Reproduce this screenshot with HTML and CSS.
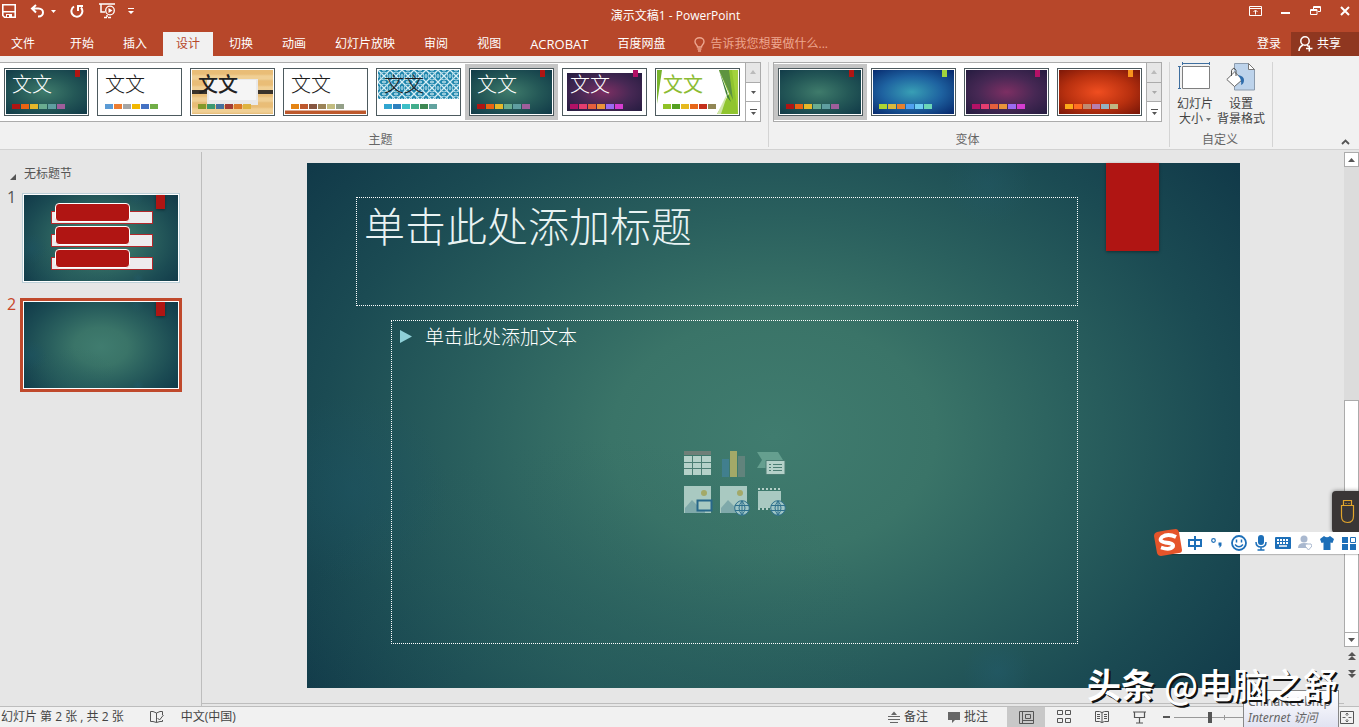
FILE: index.html
```html
<!DOCTYPE html>
<html lang="zh-CN">
<head>
<meta charset="utf-8">
<title>演示文稿1 - PowerPoint</title>
<link rel="stylesheet" href="styles.css">
</head>
<body>
<header class="titlebar">
  <div class="quick">
    <button class="ic save" aria-label="保存"><svg width="14" height="14" viewBox="0 0 14 14"><path d="M.8.8h12.400v12.400H2.500L.8 11.500z" fill="none" stroke="#fff" stroke-width="1.600"/><path d="M1 7h12v1.500H1zM4 10h6v3.500H4z" fill="#fff"/><path d="M5 11h2v2H5z" fill="#b7472a"/></svg></button>
    <button class="ic undo" aria-label="撤消"><svg width="15" height="14" viewBox="0 0 15 14"><path d="M6 1 2 4.500l4 4M2.500 4.500h6c6 0 6 8 0 8H8" fill="none" stroke="#fff" stroke-width="2"/></svg></button>
    <button class="ic more" aria-label="撤消选项"><svg width="5" height="3"><path d="M0 0h5L2.500 3z" fill="#fff"/></svg></button>
    <button class="ic redo" aria-label="重复"><svg width="14" height="14" viewBox="0 0 14 14"><path d="M4 2.500a5.500 5.500 0 1 0 7 1M8 7V2h5" fill="none" stroke="#fff" stroke-width="2"/></svg></button>
    <button class="ic show" aria-label="从头开始"><svg width="17" height="16" viewBox="0 0 17 16"><path d="M0 1h16M2 1v8h4M5 14.500h3M9 14.500h3M8 12v2" fill="none" stroke="#fff" stroke-width="1.500"/><circle cx="11" cy="7.500" r="4.300" fill="none" stroke="#fff" stroke-width="1.300"/><path d="m9.500 5 4 2.500-4 2.500z" fill="#fff"/></svg></button>
    <button class="ic custom" aria-label="自定义快速访问工具栏"><svg width="6" height="6"><path d="M0 0h6v1H0zM0 3h6L3 6z" fill="#fff"/></svg></button>
  </div>
  <div class="doc">演示文稿1 - PowerPoint</div>
  <div class="winctl">
    <button class="ic" aria-label="功能区显示选项"><svg width="13" height="10"><path d="M.5.5h12v9H.5zM.5 2.500h12M6.500 8.500v-4M4.500 6l2-2 2 2" fill="none" stroke="#fff"/></svg></button>
    <button class="ic" aria-label="最小化"><svg width="10" height="10"><path d="M0 6h9v2H0z" fill="#fff"/></svg></button>
    <button class="ic" aria-label="还原"><svg width="11" height="10"><path d="M3.500 3V.5h7v5H8M.5 3.500H7v5H.5zM.5 4.500H7M3.500 1.500h7" fill="none" stroke="#fff"/></svg></button>
    <button class="ic" aria-label="关闭"><svg width="10" height="10"><path d="m1 1 8 8M9 1 1 9" stroke="#fff" stroke-width="2"/></svg></button>
  </div>
</header>
<nav class="tabs">
  <button class="tab file">文件</button><button class="tab">开始</button><button class="tab">插入</button><button class="tab on">设计</button><button class="tab">切换</button><button class="tab">动画</button><button class="tab">幻灯片放映</button><button class="tab">审阅</button><button class="tab">视图</button><button class="tab latin">ACROBAT</button><button class="tab">百度网盘</button>
  <label class="tell"><svg width="11" height="15" viewBox="0 0 11 15"><path d="M3.500 10C3.500 8 1 7.500 1 4.700a4.500 4 0 0 1 9 0C10 7.500 7.500 8 7.500 10zM3.500 12h4M4 14h3" fill="none" stroke="#eda68f" stroke-width="1.400"/></svg><input type="text" placeholder="告诉我您想要做什么..." aria-label="告诉我您想要做什么"></label>
  <button class="login">登录</button>
  <button class="share"><svg width="15" height="16" viewBox="0 0 15 16"><circle cx="7" cy="5" r="4.200" fill="none" stroke="#fff" stroke-width="1.500"/><path d="M1 15c0-3 2-5 4-6M9 9l1.500 1.500M8 12.500h6.500M11.300 9.500v6" fill="none" stroke="#fff" stroke-width="1.500"/></svg>共享</button>
</nav>
<section class="ribbon">
  <div class="group">
    <div class="gallery first">
      <button class="item"><span class="thumb teal"><span class="aa">文文</span><span class="chips"><i></i><i></i><i></i><i></i><i></i><i></i></span></span></button>
      <button class="item"><span class="thumb office"><span class="aa">文文</span><span class="chips"><i></i><i></i><i></i><i></i><i></i><i></i></span></span></button>
      <button class="item"><span class="thumb wood"><svg class="art" viewBox="0 0 81 44"><path d="M0 20h81v4H0z" fill="#3a332b"/><path d="M15 9h51v26H15z" fill="#e9e9ea"/><path d="M17 10h47v20H17z" fill="#f5f5f5"/></svg><span class="aa heavy">文文</span><span class="chips"><i></i><i></i><i></i><i></i><i></i><i></i></span></span></button>
      <button class="item"><span class="thumb retro"><span class="aa">文文</span><span class="chips"><i></i><i></i><i></i><i></i><i></i><i></i></span></span></button>
      <button class="item"><span class="thumb lattice"><svg class="art" viewBox="0 0 81 44"><defs><pattern id="lat" width="12" height="12" patternUnits="userSpaceOnUse"><rect width="12" height="12" fill="#2187ad"/><path d="M0 0l12 12M12 0L0 12" stroke="#d6eef5" stroke-width="1.300"/><circle cx="6" cy="6" r="4" fill="none" stroke="#a9d6e5"/><path d="M0 4v4M12 4v4M4 0h4M4 12h4" stroke="#bfe2ec" stroke-width="1.300"/></pattern></defs><rect width="81" height="29" fill="url(#lat)"/></svg><span class="aa">文文</span><span class="chips"><i></i><i></i><i></i><i></i><i></i><i></i></span></span></button>
      <button class="item sel"><span class="thumb teal"><span class="aa">文文</span><span class="chips"><i></i><i></i><i></i><i></i><i></i><i></i></span></span></button>
      <button class="item"><span class="thumb plum inset"><span class="aa">文文</span><span class="chips"><i></i><i></i><i></i><i></i><i></i><i></i></span></span></button>
      <button class="item"><span class="thumb facet"><svg class="art" viewBox="0 0 81 44"><path d="M0 0h5L0 34z" fill="#77b32b"/><path d="M62 0h19v44H60l12-20z" fill="#90c52f"/><path d="M62 0h10l4 30z" fill="#5e9440"/><path d="M62 0l12 32-4-5z" fill="#3e7f38"/><path d="M72 20l-8 24h-4z" fill="#cfe6a5"/><path d="M75 0h6v44z" fill="#a3d23c"/></svg><span class="aa green">文文</span><span class="chips"><i></i><i></i><i></i><i></i><i></i><i></i></span></span></button>
      <div class="spin"><button disabled aria-label="上一行"><svg width="6" height="4"><path d="M0 4h6L3 0z" fill="#bbb"/></svg></button><button aria-label="下一行"><svg width="5" height="3"><path d="M0 0h5L2.500 3z" fill="#555"/></svg></button><button aria-label="其他主题"><svg width="7" height="6"><path d="M0 0h7v1H0zM1 3h5L3.500 6z" fill="#555"/></svg></button></div>
    </div>
    <div class="gname">主题</div>
  </div>
  <div class="group variants">
    <div class="gallery">
      <button class="item sel"><span class="thumb teal"><span class="chips"><i></i><i></i><i></i><i></i><i></i><i></i></span></span></button>
      <button class="item"><span class="thumb blue"><span class="chips"><i></i><i></i><i></i><i></i><i></i><i></i></span></span></button>
      <button class="item"><span class="thumb plum"><span class="chips"><i></i><i></i><i></i><i></i><i></i><i></i></span></span></button>
      <button class="item"><span class="thumb fire"><span class="chips"><i></i><i></i><i></i><i></i><i></i><i></i></span></span></button>
      <div class="spin"><button disabled aria-label="上一行"><svg width="6" height="4"><path d="M0 4h6L3 0z" fill="#bbb"/></svg></button><button disabled aria-label="下一行"><svg width="5" height="3"><path d="M0 0h5L2.500 3z" fill="#aaa"/></svg></button><button aria-label="其他变体"><svg width="7" height="6"><path d="M0 0h7v1H0zM1 3h5L3.500 6z" fill="#555"/></svg></button></div>
    </div>
    <div class="gname">变体</div>
  </div>
  <div class="group customise">
    <div class="bigs">
      <button class="big"><svg width="34" height="30" viewBox="0 0 34 30"><path d="M4.500 4.500h27v22h-27z" fill="#fff" stroke="#7f7f7f"/><path d="M4 1.500h28M4.500 0v3M31.500 0v3M1.500 4v23M0 4.500h3M0 26.500h3" stroke="#3f6f9f" fill="none"/></svg><span>幻灯片<br>大小 <svg width="5" height="3"><path d="M0 0h5L2.500 3z" fill="#777"/></svg></span></button>
      <button class="big"><svg width="30" height="30" viewBox="0 0 30 30"><path d="M8 2h15l6 6v20H8z" fill="#bdd3eb"/><path d="M8.500 8V1.500h14l6 6v20.500h-20V23" fill="none" stroke="#8b9bad"/><path d="M22.500 1.500v6h6z" fill="#fff" stroke="#777"/><path d="M.8 17.500 8.500 10l8 7.500-8 7z" fill="#fff" stroke="#666"/><path d="M5.500 14V8.500q2.500-4.500 4.500 0V14" fill="none" stroke="#555"/><path d="M12 13q6 1 6 5 0 4-3 5 1-5-3-10z" fill="#2e6cab"/></svg><span>设置<br>背景格式</span></button>
    </div>
    <div class="gname">自定义</div>
  </div>
  <button class="collapse" aria-label="折叠功能区"><svg width="9" height="6"><path d="M1 5l3.500-3.500L8 5" fill="none" stroke="#555" stroke-width="1.800"/></svg></button>
</section>
<main class="work">
  <aside class="pane">
    <div class="section"><svg width="6" height="6"><path d="M6 0v6H0z" fill="#555"/></svg>无标题节</div>
    <div class="row"><span class="num">1</span><button class="mini" aria-label="幻灯片 1"><span class="pic slidebg"><span class="bars"><i></i><i></i><i></i></span></span></button></div>
    <div class="row cur"><span class="num">2</span><button class="mini" aria-label="幻灯片 2"><span class="pic slidebg"></span></button></div>
  </aside>
  <div class="stage">
    <article class="slide slidebg">
      <h1 class="ph title">单击此处添加标题</h1>
      <div class="ph body">
        <p class="bullet"><svg width="12" height="13"><path d="M0 0v13l12-6.500z" fill="#8fd0d8"/></svg>单击此处添加文本</p>
        <div class="inserts">
          <button aria-label="插入表格"><svg width="30" height="28" viewBox="0 0 30 28"><path d="M1 1h27v4H1z" fill="#6f7f78"/><path d="M1 6h27v19H1z" fill="#b5d1c9"/><path d="M1 12.500h27M1 18.500h27M9.500 6v19M18.500 6v19" stroke="#4b7d73"/></svg></button>
          <button aria-label="插入图表"><svg width="30" height="28" viewBox="0 0 30 28"><path d="M2 9h7v18H2z" fill="#417f8e"/><path d="M10 1h7v26h-7z" fill="#a3a968"/><path d="M18 6h7v21h-7z" fill="#61837c"/></svg></button>
          <button aria-label="插入 SmartArt 图形"><svg width="30" height="28" viewBox="0 0 30 28"><path d="M0 2h21l5 8-5 8H0l5-8z" fill="#659f8f"/><path d="M9 10.500h19v14H9z" fill="#b5d1c9" stroke="#4b7d73"/><path d="M12 14.500h2M16 14.500h9M12 17.500h2M16 17.500h9M12 20.500h2M16 20.500h9" stroke="#4b7d73"/></svg></button>
          <button aria-label="图片"><svg width="30" height="28" viewBox="0 0 30 28"><path d="M1 0h27v27H1z" fill="#a9c9c1"/><path d="M2 27V22l7-8 6 6 3-3 4 4v6z" fill="#7fa9aa"/><circle cx="21" cy="7" r="3" fill="#a3a968"/><path d="M14.500 14.500h14v10h-14z" fill="#a9c9c1" stroke="#28688a" stroke-width="2"/></svg></button>
          <button aria-label="联机图片"><svg width="30" height="28" viewBox="0 0 30 28"><path d="M0 0h27v27H0z" fill="#a9c9c1"/><path d="M1 27V22l7-8 6 6 3-3 4 4v6z" fill="#7fa9aa"/><circle cx="20" cy="7" r="3" fill="#a3a968"/><g fill="#9fc5c5" stroke="#2f708c"><circle cx="22" cy="22" r="7.300"/><path d="M15 19.500h14M15 24.500h14M22 15v14M22 15q-6 7 0 14q6-7 0-14" fill="none"/></g></svg></button>
          <button aria-label="插入视频文件"><svg width="30" height="28" viewBox="0 0 30 28"><path d="M1 5h23v17H1z" fill="#a9c9c1"/><path d="M1 3h23M1 23h23" stroke="#b5d1c9" stroke-width="2" stroke-dasharray="2 2"/><g fill="#9fc5c5" stroke="#2f708c"><circle cx="21" cy="22" r="7.300"/><path d="M14 19.500h14M14 24.500h14M21 15v14M21 15q-6 7 0 14q6-7 0-14" fill="none"/></g></svg></button>
        </div>
      </div>
    </article>
  </div>
  <div class="scroll">
    <button class="box" aria-label="向上滚动"><svg width="7" height="4"><path d="M0 4h7L3.500 0z" fill="#555"/></svg></button>
    <div class="track"><div class="knob"></div></div>
    <button class="box" aria-label="向下滚动"><svg width="7" height="4"><path d="M0 0h7L3.500 4z" fill="#555"/></svg></button>
    <button class="jump" aria-label="上一张幻灯片"><svg width="8" height="9"><path d="M4 0l4 4H0zM4 4l4 4H0z" fill="#555"/></svg></button>
    <button class="jump" aria-label="下一张幻灯片"><svg width="8" height="9"><path d="M0 0h8L4 4zM0 4h8L4 8z" fill="#555"/></svg></button>
  </div>
</main>
<footer class="status">
  <span>幻灯片 第 2 张 , 共 2 张</span>
  <button class="ic spell" aria-label="拼写检查"><svg width="15" height="13"><path d="M7.500 2v9.500L4 10.500H1.500v-10H4zM7.500 2 11 .5h2.500V4M13.500 9v1.500H11l-3.500 1M8.500 7l2 2 4-5" fill="none" stroke="#555"/></svg></button>
  <button class="txt">中文(中国)</button>
  <div class="right">
    <button class="txt notes"><svg width="12" height="12"><path d="M0 5.500h12M0 8.500h12M2 11.500h8" stroke="#666"/><path d="M3 4l3-3.500L9 4z" fill="#666"/></svg>备注</button>
    <button class="txt comments"><svg width="12" height="12"><path d="M0 1h12v8H7l-3 3V9H0z" fill="#666"/></svg>批注</button>
    <button class="view on" aria-label="普通视图"><svg width="15" height="13"><path d="M.5.5h14v12H.5zM3.500.5v12M6.500 3.500h5v4h-5zM3.500 9.500h11" fill="none" stroke="#555"/></svg></button>
    <button class="view" aria-label="幻灯片浏览"><svg width="15" height="14"><path d="M.5.5h5v4h-5zM8.500.5h5v4h-5zM.5 8.500h5v4h-5zM8.500 8.500h5v4h-5z" fill="none" stroke="#555"/></svg></button>
    <button class="view" aria-label="阅读视图"><svg width="14" height="14"><path d="M.5 1.500h4l2.500 1 2.500-1h4v10h-4l-2.500 1-2.500-1h-4zM7 2v11M2 4.500h3M2 6.500h3M2 8.500h3M9 4.500h3M9 6.500h3M9 8.500h3" fill="none" stroke="#555"/></svg></button>
    <button class="view" aria-label="幻灯片放映"><svg width="14" height="13"><path d="M0 1h13M1.500 1v5.500h10V1M6.500 6.500v5M3 12h7" fill="none" stroke="#555" stroke-width="1.200"/></svg></button>
    <button class="ic minus" aria-label="缩小"><svg width="7" height="4"><path d="M0 1h7v2H0z" fill="#555"/></svg></button>
    <input class="zoom" type="range" min="0" max="100" value="35" aria-label="缩放">
    <button class="ic fit" aria-label="使幻灯片适应当前窗口"><svg width="14" height="13"><path d="M.5.5h13v12H.5z" fill="none" stroke="#555"/><path d="M7 2v3M7 8v3M2.500 6.500h3M8.500 6.500h3M5.500 3.500 7 2l1.500 1.500M5.500 9.500 7 11l1.500-1.500" fill="none" stroke="#666"/></svg></button>
  </div>
</footer>
<div class="nettip"><span>ChinaNet-bhtp</span><em>Internet 访问</em></div>
<div class="usb"><svg width="15" height="24"><path d="M3.500.5h8v5h-8zM1.500 5.500h12V16q0 6.500-6 6.500t-6-6.500zM5.500 3.500h1M8.500 3.500h1" fill="none" stroke="#e2a52c" stroke-width="1.200"/></svg></div>
<div class="ime">
  <svg class="logo" width="28" height="28" viewBox="0 0 28 28"><path d="M3 3Q12 1 22 0q2 0 3 3l3 18q0 3-3 3L7 27q-3 0-4-3L0 7q0-3 3-4z" fill="#e5542a"/><path d="M22 8Q14 4 8 8q-4 4 3 5.500 9 .5 8 4-3 4-12 1" fill="none" stroke="#fff" stroke-width="3.800"/></svg>
  <button aria-label="中文输入"><svg width="14" height="14"><path d="M1 4h12v6H1zM7 0v14" fill="none" stroke="#1d6fb8" stroke-width="2"/></svg></button>
  <button aria-label="中文标点"><svg width="12" height="12"><circle cx="2.500" cy="3.500" r="1.800" fill="none" stroke="#1d6fb8" stroke-width="1.200"/><path d="M7.500 5.500h3v3L8.500 11v-2.500h-1z" fill="#1d6fb8"/></svg></button>
  <button aria-label="表情"><svg width="16" height="16"><circle cx="8" cy="8" r="7" fill="none" stroke="#1d6fb8" stroke-width="1.800"/><path d="M5.500 4.500v3M10.500 4.500v3M4 9.500q4 4.500 8 0" fill="none" stroke="#1d6fb8" stroke-width="1.500"/></svg></button>
  <button aria-label="语音"><svg width="12" height="16"><rect x="3" width="6" height="10" rx="3" fill="#1d6fb8"/><path d="M1 7q0 5 5 5t5-5M6 12v3M2.500 15h7" fill="none" stroke="#1d6fb8" stroke-width="1.500"/></svg></button>
  <button aria-label="软键盘"><svg width="16" height="12"><rect width="16" height="12" rx="1" fill="#1d6fb8"/><path d="M2 3h12M2 6h12" stroke="#fff" stroke-width="1.800" stroke-dasharray="2 1"/><path d="M4 9h8" stroke="#fff" stroke-width="1.500"/></svg></button>
  <button aria-label="账户"><svg width="14" height="16"><circle cx="6" cy="4" r="3.500" fill="#a9b8cf"/><path d="M0 13q0-5 6-5t6 5z" fill="#a9b8cf"/><path d="M8 9h5l1 2-3.500 4L7 11z" fill="#fff" stroke="#a9b8cf"/></svg></button>
  <button aria-label="皮肤"><svg width="14" height="14"><path d="M4 0q3 2.500 6 0l4 3-1.500 4-2-.5V14h-7V6.500l-2 .5L0 3z" fill="#1d6fb8"/></svg></button>
  <button aria-label="工具箱"><svg width="14" height="13"><path d="M0 0h6v6H0zM0 7h6v6H0zM8 7h6v6H8z" fill="#1d6fb8"/><path d="M8.500.5h5v5h-5z" fill="none" stroke="#1d6fb8"/></svg></button>
</div>
<div class="mark"><b>头条</b><span>@电脑之舒</span></div>
</body>
</html>
```

FILE: styles.css
```css
* { box-sizing: border-box; }
body {
  margin: 0; height: 100vh; display: flex; flex-direction: column; overflow: hidden;
  position: relative; background: #e6e6e6; color: #444;
  font: 12px/16px "Open Sans", "Noto Sans CJK SC", sans-serif;
}
button { border: 0; padding: 0; margin: 0; background: none; font: inherit; color: inherit; }
svg { display: block; flex: none; }
.ic { display: flex; align-items: center; justify-content: center; }

.titlebar { display: grid; grid-template-columns: 1fr auto 1fr; height: 32px; flex: none; background: #b7472a; color: #fff; padding-right: 8px; }
.quick { display: flex; align-items: center; height: 22px; padding-left: 2px; }
.undo { margin-left: 14px; }
.more { margin-left: 6px; }
.redo { margin-left: 14px; }
.show { margin-left: 15px; }
.custom { margin-left: 12px; }
.doc { line-height: 32px; }
.winctl { display: flex; justify-content: flex-end; height: 22px; gap: 19px; padding-right: 1px; align-items: center; }

.tabs { display: flex; gap: 3px; height: 24px; flex: none; background: #b7472a; color: #fff; line-height: 22px; }
.tab { padding: 0 13px; white-space: nowrap; }
.file { padding: 0 11px; margin-right: 8px; }
.tab.on { background: #f1f1f1; color: #b7472a; }
.latin { font-size: 13px; }
.tell { display: flex; align-items: center; gap: 5px; margin-left: 13px; }
.tell input { width: 140px; border: 0; padding: 0; background: none; color: #fff; font: inherit; outline: 0; }
.tell input::placeholder { color: #eda68f; opacity: 1; }
.login { margin-left: auto; padding: 0 7px; }
.share { display: flex; align-items: center; gap: 4px; padding: 0 18px 0 7px; background: #8f3720; }

.ribbon { display: flex; height: 94px; flex: none; background: #f1f1f1; border-bottom: 1px solid #d2d2d2; padding-top: 6px; position: relative; }
.group { display: flex; flex-direction: column; justify-content: space-between; height: 85px; margin-bottom: 2px; padding-right: 7px; border-right: 1px solid #d4d4d4; }
.variants { padding-left: 4px; }
.gallery { display: flex; height: 60px; background: #fff; border: 1px solid #ababab; }
.gallery.first { border-left: 0; }
.item { padding: 4px; margin: 1px 0; width: 93px; }
.item.sel { background: #c5c5c5; }
.gname { text-align: center; color: #666; line-height: 14px; }
.spin { display: flex; flex-direction: column; width: 15px; border-left: 1px solid #ababab; }
.first .spin { margin-left: 1px; }
.spin button { flex: 1; display: flex; align-items: center; justify-content: center; }
.spin button + button { border-top: 1px solid #ababab; }
.spin button:disabled { background: #e6e6e6; }
.thumb { --tag: transparent; position: relative; isolation: isolate; display: flex; flex-direction: column; justify-content: space-between; width: 85px; height: 48px; border: 1px solid #4d5a5e; padding: 3px 7px 6px; background: #fff; overflow: hidden; text-align: left; }
.thumb::before { content: ""; position: absolute; inset: 1px; z-index: -2; background: var(--bg); }
.thumb::after { content: ""; position: absolute; top: 1px; right: 8px; width: 5px; height: 7px; background: var(--tag); }
.thumb.inset::before { inset: 4px; }
.art { position: absolute; inset: 1px; width: 81px; height: 44px; z-index: -1; }
.aa { font-weight: 300; font-size: 20px; line-height: 24px; color: #fff; font-family: "Noto Sans CJK SC", sans-serif; }
.office .aa, .retro .aa, .lattice .aa { color: #1c1c1c; }
.aa.heavy { font-weight: 500; color: #222; }
.aa.green { color: #8cbc33; font-weight: 400; }
.chips { display: flex; gap: 1px; margin-top: auto; }
.chips i { width: 8px; height: 5px; background: var(--c1); }
.chips i:nth-child(2) { background: var(--c2); }
.chips i:nth-child(3) { background: var(--c3); }
.chips i:nth-child(4) { background: var(--c4); }
.chips i:nth-child(5) { background: var(--c5); }
.chips i:nth-child(6) { background: var(--c6); }
.teal { --bg: radial-gradient(ellipse at 48% 50%, #3f7b6b, #245857 50%, #123c49 95%); --tag: #b01513; --c1: #b01513; --c2: #ea6312; --c3: #e6b729; --c4: #6aac90; --c5: #5f9ea0; --c6: #9e5e9b; }
.office { --bg: #fff; --c1: #5b9bd5; --c2: #ed7d31; --c3: #a5a5a5; --c4: #f2b800; --c5: #4472c4; --c6: #70ad47; }
.wood { --bg: repeating-linear-gradient(#e9bd77 0 4px, #f0cf94 6px 9px, #e6bb76 11px); --c1: #83992a; --c2: #3c9770; --c3: #44709d; --c4: #a23c33; --c5: #d97828; --c6: #deb340; }
.retro { --bg: linear-gradient(#fff 40px, #bd582c 41px); --c1: #e48312; --c2: #bd582c; --c3: #865640; --c4: #9b8357; --c5: #c2bc80; --c6: #94a088; }
.lattice { --bg: #fff; --c1: #31a5d0; --c2: #2d80be; --c3: #3dbfc7; --c4: #42ae8c; --c5: #3e8853; --c6: #62a39f; }
.plum { --bg: radial-gradient(ellipse at 50% 50%, #7d2f63, #472854 50%, #281d42 95%); --tag: #b31166; --c1: #b31166; --c2: #e33d6f; --c3: #e45f3c; --c4: #e9943a; --c5: #9b6bf2; --c6: #d53dd0; }
.facet { --bg: #fff; --c1: #90c226; --c2: #54a021; --c3: #e6b91e; --c4: #e76618; --c5: #c42f1a; --c6: #918655; }
.blue { --bg: radial-gradient(ellipse at 48% 50%, #389fb5, #1e62a0 50%, #082c70 95%); --tag: #9fd33c; --c1: #acd433; --c2: #d9b83c; --c3: #e6802e; --c4: #50a0f0; --c5: #6fcdf2; --c6: #6cd6b7; }
.fire { --bg: radial-gradient(ellipse at 48% 50%, #f04e20, #b8300f 55%, #7d1808 95%); --tag: #f8931d; --c1: #fba919; --c2: #ff6e23; --c3: #c08a70; --c4: #b77fae; --c5: #94b0c0; --c6: #bfb783; }
.customise { padding: 0 7px 0 5px; }
.bigs { display: flex; gap: 2px; text-align: center; line-height: 15px; white-space: nowrap; }
.big { display: flex; flex-direction: column; align-items: center; gap: 4px; min-width: 40px; }
.big span svg { display: inline-block; vertical-align: middle; }
.collapse { position: absolute; right: 9px; bottom: 4px; }

.work { display: flex; flex: 1; min-height: 0; padding-top: 2px; }
.pane { width: 202px; flex: none; border-right: 1px solid #bdbdbd; padding: 14px 0 0 7px; }
.section { display: flex; align-items: center; gap: 8px; padding-left: 3px; color: #555; }
.section svg { margin-top: 6px; }
.row { display: flex; gap: 7px; margin-top: 12px; color: #555; }
.num { width: 9px; font-size: 16px; line-height: 24px; margin-top: -9px; }
.mini { width: 156px; padding: 1px; background: #fff; outline: 1px solid #bcd0d8; }
.pic { display: block; aspect-ratio: 154 / 86; }
.row.cur { color: #c8472a; margin-top: 19px; }
.cur .mini { outline: 3px solid #c0492c; }
.slidebg {
  position: relative;
  background:
    radial-gradient(circle at 73% 4%, #235a6860, transparent 5%),
    radial-gradient(circle at 74% 97%, #235c6c80, transparent 4%),
    radial-gradient(circle at 5% 62%, #1d566860, transparent 10%),
    radial-gradient(ellipse at 30% 95%, #2c646066, transparent 32%),
    radial-gradient(ellipse 62% 80% at 50% 52%, #407c6f 0%, #3a7468 28%, #2a605e 52%, #1b4b53 78%, #103848 105%);
}
.slidebg::after { content: ""; position: absolute; top: 0; right: 8.7%; width: 5.7%; height: 16.800%; background: #b01513; box-shadow: 0 1px 3px #0006; }
.bars { display: flex; flex-direction: column; gap: 10px; padding: 16px 25px 0 27px; }
.bars i { display: block; position: relative; height: 13px; background: #eeecee; border: 1px solid #b3282b; }
.bars i::before { content: ""; position: absolute; left: 3px; top: -9px; width: 73px; height: 17px; border: 1px solid #fff; border-radius: 4px; background: #b01513; }
.stage { flex: 1; padding: 11px 104px 0 105px; border-bottom: 1px solid #bdbdbd; margin-bottom: 2px; }
.slide { display: grid; grid-template-rows: 109fr 324fr; row-gap: 14px; aspect-ratio: 933 / 525; padding: 34px 162px 44px 49px; font-family: "Noto Sans CJK SC", sans-serif; color: #e9f3f3; }
.ph { margin: 0; border: 1px dotted #fff; font-weight: 300; }
.title { font-size: 41px; line-height: 52px; padding-left: 7px; }
.body { margin-left: 35px; padding: 0 8px; }
.bullet { display: flex; align-items: center; gap: 13px; margin: 0; font-size: 19px; line-height: 30px; color: #fff; }
.inserts { display: grid; grid-template-columns: repeat(3, 30px); justify-content: center; gap: 7px; margin-top: 98px; }
.inserts button { height: 29px; }
.inserts svg { overflow: visible; }
.scroll { width: 15px; flex: none; display: flex; flex-direction: column; padding-bottom: 23px; }
.box { height: 15px; border: 1px solid #ababab; background: #fff; display: flex; align-items: center; justify-content: center; }
.track { flex: 1; display: flex; flex-direction: column; justify-content: flex-end; background: #dcdcdc; }
.knob { height: 50%; background: #fff; border: 1px solid #ababab; border-bottom: 0; }
.jump { height: 18px; display: flex; align-items: center; justify-content: center; }

.status { display: flex; align-items: center; height: 21px; flex: none; padding: 0 5px 0 1px; background: #f1f1f1; border-top: 1px solid #bdbdbd; white-space: nowrap; }
.spell { margin: 0 17px 0 25px; }
.right { display: flex; align-items: center; margin-left: auto; height: 20px; }
.txt { display: flex; align-items: center; gap: 4px; }
.comments { margin: 0 19px 0 20px; }
.view { width: 38px; height: 20px; display: flex; align-items: center; justify-content: center; }
.view.on { background: #c8c8c8; }
.minus { margin: 0 4px; }
.zoom { appearance: none; width: 100px; height: 11px; margin: 0 66px 0 0; background: linear-gradient(#999, #999) center / 1px 5px no-repeat, linear-gradient(#999, #999) center / 100% 1px no-repeat; }
.zoom::-webkit-slider-thumb { appearance: none; width: 4px; height: 11px; background: #555; }

.nettip { position: absolute; right: 20px; bottom: 0; width: 96px; height: 37px; display: flex; flex-direction: column; padding: 3px 4px 0; line-height: 16px; color: #666; white-space: nowrap; background: linear-gradient(#fff, #e1e3f2); border: 1px solid #888; border-bottom: 0; font-family: "Noto Sans", "Noto Sans CJK SC", sans-serif; }
.usb { position: absolute; right: 0; bottom: 194px; width: 27px; height: 42px; display: flex; align-items: center; justify-content: center; padding-left: 3px; background: #3a3636; border-radius: 4px 0 0 4px; box-shadow: 0 0 4px #0007; }
.ime { position: absolute; right: 0; bottom: 173px; height: 22px; display: flex; align-items: center; gap: 3px; padding-right: 1px; background: linear-gradient(90deg, transparent 16px, #fff 16px); box-shadow: 8px 1px 1px #0003; }
.ime button { width: 19px; display: flex; justify-content: center; }
.mark { position: absolute; right: 21px; bottom: 22px; display: flex; gap: 9px; font: 35px/42px "Noto Sans CJK SC", sans-serif; color: #fff; text-shadow: 2px 2px 0 #111; white-space: nowrap; }
.mark b { font-size: 34px; font-weight: 700; }
.mark span { font-weight: 500; }
```
